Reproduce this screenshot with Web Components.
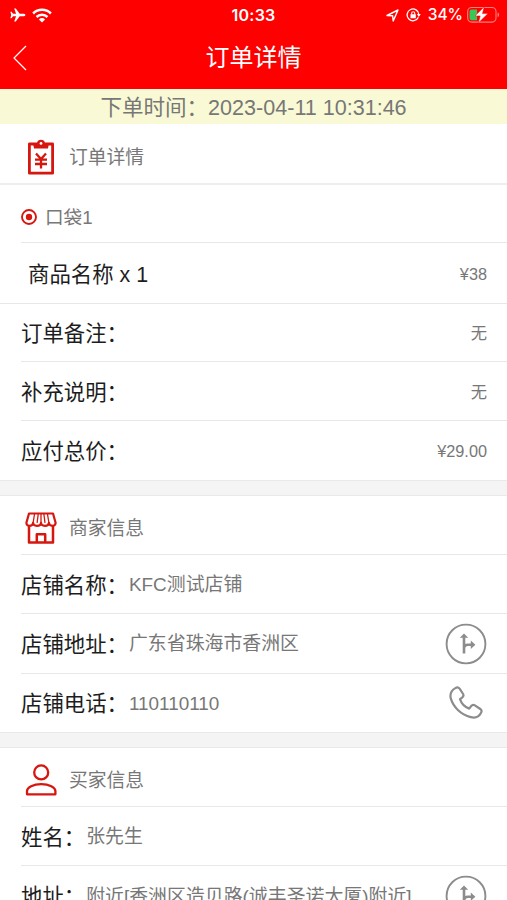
<!DOCTYPE html>
<html lang="zh-CN">
<head>
<meta charset="utf-8">
<title>订单详情</title>
<style>
html,body{margin:0;height:900px;overflow:hidden;background:#fff}
body{font-family:"Liberation Sans","Noto Sans CJK SC",sans-serif;color:#222}
</style>
</head>
<body>
<order-page></order-page>
<script>
const define = (name, html, setup) => customElements.define(name, class extends HTMLElement {
  constructor() {
    super();
    const t = document.createElement('template');
    t.innerHTML = html;
    this.attachShadow({mode: 'open'}).append(t.content.cloneNode(true));
  }
  connectedCallback() { if (setup) setup(this); }
});

const icons = {
  clipboard: [28, 38, `<g fill="none" stroke="#d5170f" stroke-width="2.8"><path d="M2.400 6h23.200v29.200H2.400z" stroke-linejoin="round"/><path d="M9 15.500l5 5.600 5-5.600M8 21.600h12M8 26h12M14 21v9.500" stroke-width="2.300"/></g><path d="M6 5h4a4.100 4.100 0 0 1 8 0h4l-1 5.400H7z" fill="#d5170f"/><circle cx="14" cy="5.400" r="1.400" fill="#fff"/>`],
  shop: [32, 32, `<g fill="none" stroke="#d5170f" stroke-width="2.200" stroke-linejoin="round"><path d="M4 1.500h24l2.600 9.300c0 2-1.200 3-2.800 3-2.300 0-3.900-1-3.900-3 0 2-1.500 3-3.900 3-2.500 0-4-1-4-3 0 2-1.500 3-4 3-2.400 0-3.900-1-3.900-3 0 2-1.600 3-3.900 3-1.600 0-2.800-1-2.800-3z"/><path d="M8.100 10.800l1.500-9.300M12.100 10.800l1.200-9.300M16 10.800V1.500M20 10.800l-1.200-9.300M23.900 10.800l-1.500-9.300" stroke-width="1.300"/><path d="M4 14v16.400h24V14M11.800 30.400v-8.200h8.400v8.200" stroke-width="2.500"/></g>`],
  person: [32, 32, `<g fill="none" stroke="#d5170f" stroke-width="2.300"><circle cx="16.200" cy="8.400" r="7"/><path d="M2 30.300v-3.200c0-3.800 6.200-7 14.200-7s14.200 3.200 14.200 7v3.200z" stroke-linejoin="round"/></g>`],
  pocket: [16, 16, `<circle cx="8" cy="8" r="7" fill="none" stroke="#d5170f" stroke-width="1.900"/><circle cx="8" cy="8" r="3.200" fill="#d5170f"/>`],
  route: [42, 42, `<g fill="none" stroke="#8c8c8c"><circle cx="21" cy="21" r="19.400" stroke-width="1.900"/><path d="M19 30.600V13M19 25.500c0-2.600 1.400-3.800 4-3.800h3.500" stroke-width="2.600"/></g><path d="M19 10.400l4.200 4.300h-8.400zM30.400 21.700l-4.600 4.200v-8.400z" fill="#8c8c8c"/>`],
  phone: [34, 34, `<path d="M6.300 2.100C8.200.9 9.300 1 10.600 2.700l3.200 4.800c1.200 1.800 1 2.800-.7 4.100l-2.100 1.600c1.300 4.100 5.200 8 9.200 9.400l2-2.600c1.100-1.400 2.200-1.600 3.700-.6l5.400 3.600c1.500 1.100 1.700 2.100.8 3.700-2 3.800-5.800 5.600-10.300 4.400C11.600 28.500 4.200 20.800 1.800 12.400.7 8 2.400 4.400 6.300 2.100z" fill="none" stroke="#8c8c8c" stroke-width="2.200" stroke-linejoin="round"/>`],
  back: [16, 28, `<path d="M14 2L2 14l12 12" fill="none" stroke="#fff" stroke-width="1.200"/>`],
  plane: [16, 14, `<path d="M15.400 7c0-.8-1-1.300-2.500-1.300H9.700L5.800.5H4.200l1.900 5.200H3.100L1.500 3.800H.4L1.200 7l-.8 3.200h1.100l1.600-1.900h3L4.200 13.500h1.600l3.900-5.200h3.200c1.500 0 2.500-.5 2.500-1.300z" fill="#fff"/>`],
  wifi: [20, 15, `<g fill="none" stroke="#fff" stroke-width="2.500"><path d="M1.100 5.500a12.700 12.700 0 0 1 17.800 0M4.500 9a7.900 7.900 0 0 1 11 0"/></g><path d="M6.900 11.500a4.500 4.500 0 0 1 6.200 0L10 14.600z" fill="#fff"/>`],
  location: [13, 13, `<path d="M1 6.500L12 1 7.200 12 6.600 6.700z" fill="none" stroke="#fff" stroke-width="1.400" stroke-linejoin="round"/>`],
  lock: [15, 14, `<g fill="none" stroke="#fff" stroke-width="1.300"><path d="M12.400 9.300A5.900 5.900 0 1 1 12.900 6.500"/><path d="M5.700 6.500V5.200a1.500 1.500 0 0 1 3 0v1.300" stroke-width="1.100"/></g><path d="M4.500 6.300h5.300v3.900H4.500zM10.900 6.100h3.900l-2 2.800z" fill="#fff"/>`],
  battery: [33, 18, `<rect x=".7" y="1.500" width="28.300" height="14.600" rx="4" fill="none" stroke="#fff" stroke-opacity=".5" stroke-width="1.100"/><path d="M30.600 6.500c2 .7 2 4 0 4.700z" fill="#fff" fill-opacity=".5"/><path d="M4.800 3.400H10v10.800H4.800a2.300 2.300 0 0 1-2.300-2.300V5.700a2.300 2.300 0 0 1 2.300-2.300z" fill="#35c759"/><path d="M17.200.8L8 9.900h5.200L11.300 17l9.700-9.400h-5.500z" fill="#fff" stroke="#f00" stroke-width=".5"/>`]
};
define('app-icon', '', el => {
  const [w, h, body] = icons[el.getAttribute('name')];
  el.shadowRoot.innerHTML = `<style>:host{display:block;flex:none}svg{display:block}</style><svg width="${w}" height="${h}" viewBox="0 0 ${w} ${h}">${body}</svg>`;
});

define('status-bar', `<style>
:host{display:grid;grid-template-columns:1fr auto 1fr;align-items:center;height:30px;color:#fff;font:600 16px/30px Inter,sans-serif}
.l{display:flex;align-items:center;gap:6px;padding-left:10px}
.t{letter-spacing:.25px}
.r{display:flex;align-items:center;justify-content:flex-end;gap:7px;padding-right:7px}
.p{font-weight:500;font-size:15.500px;margin-right:-3px}
</style><div class="l"><app-icon name="plane"></app-icon><app-icon name="wifi"></app-icon></div><span class="t">10:33</span>
<div class="r"><app-icon name="location"></app-icon><app-icon name="lock"></app-icon><span class="p">34%</span><app-icon name="battery"></app-icon></div>`);

define('nav-bar', `<style>
:host{display:grid;grid-template-columns:60px 1fr 60px;align-items:center;height:58px;color:#fff;font-size:24px;line-height:36px;text-align:center}
app-icon{padding-left:12px;padding-bottom:2px}.t{padding-bottom:3px}
</style><app-icon name="back"></app-icon><div class="t"><slot></slot></div>`);

define('section-head', `<style>
:host{display:flex;align-items:center;height:59px;margin-left:21px;border-bottom:1px solid #e7e7e7;color:#777;font-size:18.800px;line-height:28px}
:host([full]){margin-left:0;padding-left:21px;border-bottom-width:2px;border-color:#eee}
.i{width:40px;margin-right:8px;display:flex;justify-content:center;padding-top:6px}
.t{padding-top:9px}
</style><div class="i"><slot name="icon"></slot></div><div class="t"><slot></slot></div>`);

define('info-row', `<style>
:host{display:flex;align-items:center;box-sizing:border-box;height:59.300px;margin-left:21px;padding-right:20px;border-bottom:1px solid #e7e7e7;color:#777;font-size:18.900px;line-height:30px}
:host([full]){margin-left:0;padding-left:28px}
:host([last]){border-bottom:0}
.k{font-size:21.400px;color:#1d1d1d;white-space:nowrap;padding-top:3px}
.v{flex:1;white-space:nowrap;padding:2px 0 0 1px}
.e{font-size:16.300px;padding-top:1px}
</style><div class="k"><slot name="label"></slot></div><div class="v"><slot></slot></div><div class="e"><slot name="end"></slot></div>`);

define('pocket-row', `<style>
:host{display:flex;align-items:center;box-sizing:border-box;height:58px;margin-left:21px;border-bottom:1px solid #e7e7e7;color:#777;font-size:18.600px;line-height:28px;gap:8px;padding-top:7px}
.t{padding-top:2px}
</style><app-icon name="pocket"></app-icon><div class="t"><slot></slot></div>`);

define('order-page', `<style>
:host{display:block;width:507px;height:900px;overflow:hidden}
header{background:#f00;height:89px}
.time{height:35px;background:#f9fad5;color:#777;font-size:21.550px;line-height:37px;text-align:center}
.gap{box-sizing:border-box;height:16px;background:#f4f4f4;border-top:1px solid #e9e9e9;border-bottom:1px solid #e9e9e9}
</style>
<header><status-bar></status-bar><nav-bar>订单详情</nav-bar></header>
<div class="time">下单时间：2023-04-11 10:31:46</div>
<section>
<section-head full><app-icon slot="icon" name="clipboard"></app-icon>订单详情</section-head>
<pocket-row>口袋1</pocket-row>
<info-row full style="height:61px"><span slot="label">商品名称 x 1</span><span slot="end">¥38</span></info-row>
<info-row style="height:58px"><span slot="label">订单备注：</span><span slot="end">无</span></info-row>
<info-row><span slot="label">补充说明：</span><span slot="end">无</span></info-row>
<info-row last style="height:58.700px"><span slot="label">应付总价：</span><span slot="end">¥29.00</span></info-row>
</section>
<div class="gap"></div>
<section>
<section-head style="height:58px"><app-icon slot="icon" name="shop"></app-icon>商家信息</section-head>
<info-row><span slot="label">店铺名称：</span>KFC测试店铺</info-row>
<info-row><span slot="label">店铺地址：</span>广东省珠海市香洲区<app-icon slot="end" name="route"></app-icon></info-row>
<info-row last style="height:58.400px"><span slot="label">店铺电话：</span>110110110<app-icon slot="end" name="phone" style="padding-right:4px"></app-icon></info-row>
</section>
<div class="gap"></div>
<section>
<section-head style="height:58px"><app-icon slot="icon" name="person"></app-icon>买家信息</section-head>
<info-row><span slot="label">姓名：</span>张先生</info-row>
<info-row last><span slot="label">地址：</span>附近[香洲区造贝路(诚丰圣诺大厦)附近]<app-icon slot="end" name="route"></app-icon></info-row>
</section>`);
</script>
</body>
</html>
